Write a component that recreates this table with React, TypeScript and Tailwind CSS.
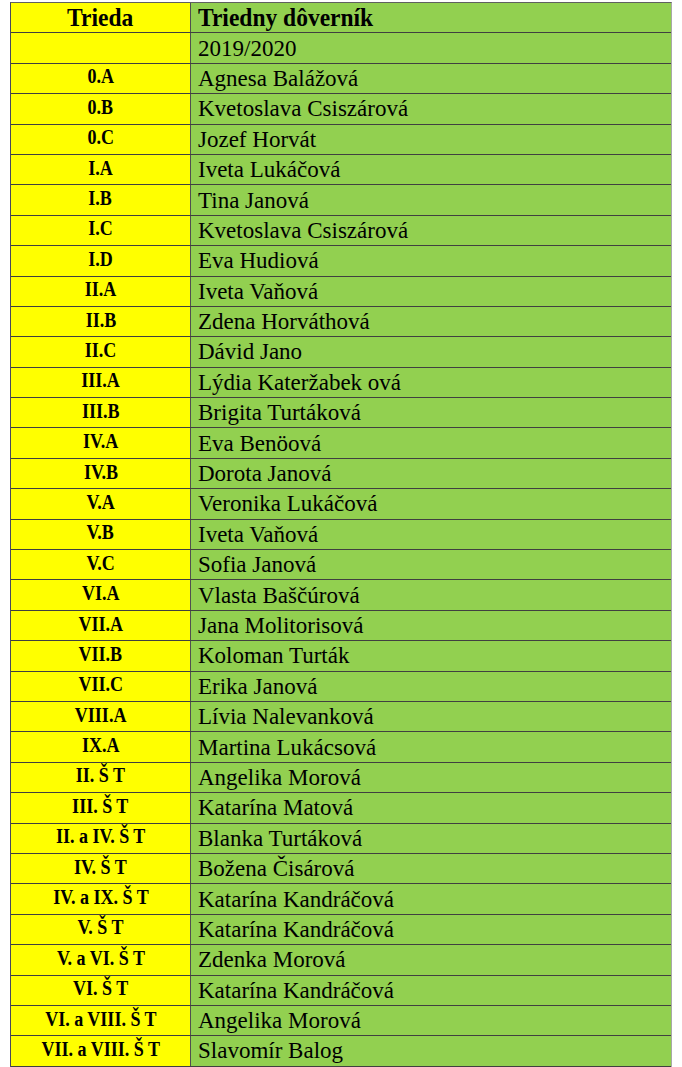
const rows: [string, string][] = [
  ["0.A", "Agnesa Balážová"],
  ["0.B", "Kvetoslava Csiszárová"],
  ["0.C", "Jozef Horvát"],
  ["I.A", "Iveta Lukáčová"],
  ["I.B", "Tina Janová"],
  ["I.C", "Kvetoslava Csiszárová"],
  ["I.D", "Eva Hudiová"],
  ["II.A", "Iveta Vaňová"],
  ["II.B", "Zdena Horváthová"],
  ["II.C", "Dávid Jano"],
  ["III.A", "Lýdia Kateržabek ová"],
  ["III.B", "Brigita Turtáková"],
  ["IV.A", "Eva Benöová"],
  ["IV.B", "Dorota Janová"],
  ["V.A", "Veronika Lukáčová"],
  ["V.B", "Iveta Vaňová"],
  ["V.C", "Sofia Janová"],
  ["VI.A", "Vlasta Baščúrová"],
  ["VII.A", "Jana Molitorisová"],
  ["VII.B", "Koloman Turták"],
  ["VII.C", "Erika Janová"],
  ["VIII.A", "Lívia Nalevanková"],
  ["IX.A", "Martina Lukácsová"],
  ["II. Š T", "Angelika Morová"],
  ["III. Š T", "Katarína Matová"],
  ["II. a IV. Š T", "Blanka Turtáková"],
  ["IV. Š T", "Božena Čisárová"],
  ["IV. a IX. Š T", "Katarína Kandráčová"],
  ["V. Š T", "Katarína Kandráčová"],
  ["V. a VI. Š T", "Zdenka Morová"],
  ["VI. Š T", "Katarína Kandráčová"],
  ["VI. a VIII. Š T", "Angelika Morová"],
  ["VII. a VIII. Š T", "Slavomír Balog"],
];

function Row({ left, right, head }: { left: string; right: string; head?: boolean }) {
  return (
    <div className="flex h-[30.4px] border-b border-[#404040]">
      <div className="w-[180px] shrink-0 bg-[#ffff00] border-r border-[#505050] flex items-center justify-center font-bold">
        {head ? (
          <span className="text-[25px] scale-x-[0.94]">{left}</span>
        ) : (
          <span className="text-[20px] scale-x-[0.9] -translate-y-[2px] whitespace-nowrap">{left}</span>
        )}
      </div>
      <div className="flex-1 bg-[#92d050] flex items-center pl-[7px]">
        {head ? (
          <span className="text-[25px] font-bold scale-x-[0.94] origin-left whitespace-nowrap">{right}</span>
        ) : (
          <span className="text-[23px] whitespace-nowrap">{right}</span>
        )}
      </div>
    </div>
  );
}

export default function App() {
  return (
    <div className="bg-white min-h-screen pt-[2px] pl-[10px] font-['Liberation_Serif',serif] text-black leading-none">
      <div className="w-[662px] border-t border-l border-r border-t-[#606060] border-l-[#4a4a5a] border-r-[#a8a8a8]">
        <Row left="Trieda" right="Triedny dôverník" head />
        <Row left="" right="2019/2020" />
        {rows.map(([l, r], i) => (
          <Row key={i} left={l} right={r} />
        ))}
      </div>
    </div>
  );
}
